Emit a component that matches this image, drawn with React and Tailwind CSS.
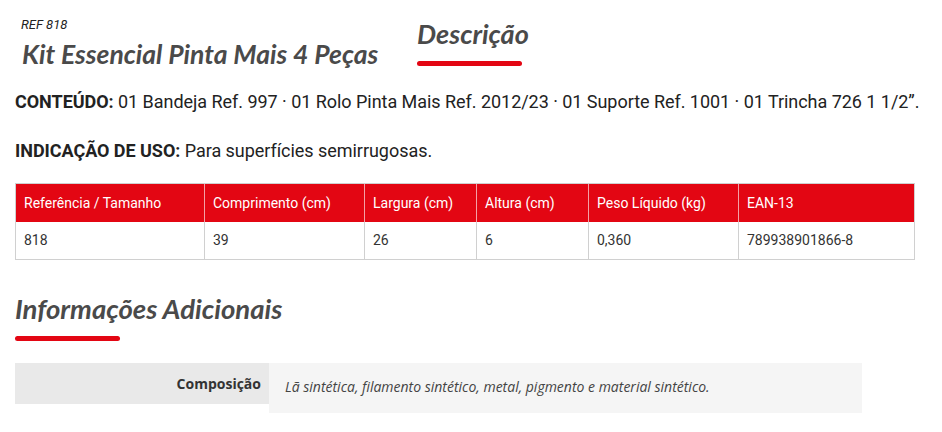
import React from 'react';

const columns = [
  { label: 'Referência / Tamanho', value: '818', width: 'w-[188px]' },
  { label: 'Comprimento (cm)', value: '39', width: 'w-[160px]' },
  { label: 'Largura (cm)', value: '26', width: 'w-[112px]' },
  { label: 'Altura (cm)', value: '6', width: 'w-[112px]' },
  { label: 'Peso Líquido (kg)', value: '0,360', width: 'w-[150px]' },
  { label: 'EAN-13', value: '789938901866-8', width: 'flex-1' },
];

function SectionTitle({ children, size }) {
  return (
    <div>
      <h2 className={`font-['Lato',sans-serif] italic font-bold leading-[30px] text-[#4a4a4a] ${size}`}>
        {children}
      </h2>
      <div className="mt-[12px] h-[5px] w-[105px] rounded-full bg-[#e30613]" />
    </div>
  );
}

export default function App() {
  return (
    <div className="w-[942px] h-[432px] bg-white overflow-hidden">
      {/* Product header */}
      <div className="flex pt-[17px]">
        <div className="pl-[21px] w-[417px]">
          <p className="font-['Roboto',sans-serif] italic text-[13px] leading-[16px] text-[#222]">REF 818</p>
          <h1 className="pl-px mt-[6px] font-['Lato',sans-serif] italic font-bold text-[26.5px] leading-[30px] text-[#4a4a4a]">
            Kit Essencial Pinta Mais 4 Peças
          </h1>
        </div>
        <div className="pt-[2px]">
          <SectionTitle size="text-[27px]">Descrição</SectionTitle>
        </div>
      </div>

      <div className="px-[15px] font-['Roboto',sans-serif] text-[18px] leading-[22px] text-[#222] tracking-[-0.04px]">
        <p className="mt-[22px]">
          <span className="font-bold">CONTEÚDO:</span> 01 Bandeja Ref. 997 · 01 Rolo Pinta Mais Ref. 2012/23 · 01 Suporte Ref. 1001 · 01 Trincha 726 1 1/2”.
        </p>
        <p className="mt-[27px]">
          <span className="font-bold">INDICAÇÃO DE USO:</span> Para superfícies semirrugosas.
        </p>
      </div>

      {/* Specs table */}
      <div className="mx-[15px] mt-[21px] w-[900px] border border-[#d0d0d0] font-['Roboto',sans-serif] text-[14px]">
        <div className="flex bg-[#e30613] text-white h-[38px]">
          {columns.map((c, i) => (
            <div
              key={c.label}
              className={`${c.width} flex items-center px-[8px] ${i > 0 ? 'border-l border-[#f3a0a6]' : ''}`}
            >
              {c.label}
            </div>
          ))}
        </div>
        <div className="flex text-[#333] h-[37px]">
          {columns.map((c, i) => (
            <div
              key={c.label}
              className={`${c.width} flex items-center px-[8px] ${i > 0 ? 'border-l border-[#d0d0d0]' : ''}`}
            >
              {c.value}
            </div>
          ))}
        </div>
      </div>

      {/* Additional info */}
      <div className="pl-[15px] mt-[34px]">
        <SectionTitle size="text-[27.5px]">Informações Adicionais</SectionTitle>
      </div>

      <div className="ml-[15px] mt-[22px] flex items-start w-[847px]">
        <div className="w-[254px] h-[41px] bg-[#e9e9e9] flex items-center justify-end pr-[8px] font-['Open_Sans',sans-serif] font-bold text-[14px] text-[#333]">
          Composição
        </div>
        <div className="flex-1 h-[50px] bg-[#f5f5f5] pl-[16px] pt-[13px] font-['Open_Sans',sans-serif] italic text-[14px] text-[#444]">
          Lã sintética, filamento sintético, metal, pigmento e material sintético.
        </div>
      </div>
    </div>
  );
}
